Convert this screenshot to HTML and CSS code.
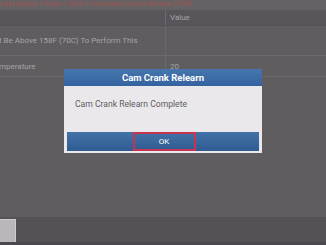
FILE: index.html
```html
<!DOCTYPE html>
<html>
<head>
<meta charset="utf-8">
<link rel="stylesheet" href="styles.css">
</head>
<body>
<div class="page">
  <div class="crumb">ically Search &gt; Pulse &gt; 2022 &gt; Powertrain Control Module (PCM)</div>
  <div class="table">
    <div class="row head">
      <div class="c1"></div>
      <div class="c2">Value</div>
    </div>
    <div class="row tall">
      <div class="c1">t Be Above 158F (70C) To Perform This</div>
      <div class="c2"></div>
    </div>
    <div class="row">
      <div class="c1">mperature</div>
      <div class="c2">20</div>
    </div>
  </div>
  <div class="spacer"></div>
  <div class="bottombar">
    <div class="btnstub"></div>
  </div>
  <div class="strip"></div>
</div>
<div class="dialog">
  <div class="dtitle">Cam Crank Relearn</div>
  <div class="dbody">Cam Crank Relearn Complete</div>
  <div class="dbtns">
    <div class="dbtn"></div>
    <div class="dbtn ok">OK</div>
    <div class="dbtn"></div>
  </div>
</div>
</body>
</html>
```
FILE: styles.css
```css
html, body {
  margin: 0;
  padding: 0;
}
body {
  width: 326px;
  height: 245px;
  overflow: hidden;
  background: #5f5d60;
  font-family: Roboto, "Liberation Sans", sans-serif;
  position: relative;
}
.page {
  display: flex;
  flex-direction: column;
  height: 245px;
}
.crumb {
  height: 10px;
  line-height: 9px;
  font-size: 6.8px;
  color: #9e544f;
  white-space: nowrap;
  overflow: hidden;
  margin-left: -1px;
  background: #656265;
}
.table {
  display: flex;
  flex-direction: column;
}
.row {
  display: flex;
  height: 20px;
  border-bottom: 1px solid #6b696c;
  font-size: 8px;
  color: #a6a4a7;
}
.row.head {
  height: 15px;
  background: #58565a;
  border-bottom: 1px solid #535154;
}
.row.tall {
  height: 29px;
}
.c1 {
  width: 166px;
  display: flex;
  align-items: center;
  white-space: nowrap;
  overflow: hidden;
  border-right: 1px solid #6b696c;
  margin-left: -1px;
}
.c2 {
  flex: 1;
  display: flex;
  align-items: center;
  padding-left: 4px;
}
.spacer {
  flex: 1;
}
.bottombar {
  height: 25px;
  background: #545255;
  display: flex;
  align-items: flex-end;
}
.btnstub {
  width: 16px;
  height: 23px;
  background: #b9b7ba;
  border-top: 1px solid #cfcdd0;
  border-right: 1px solid #cfcdd0;
  box-sizing: border-box;
}
.strip {
  height: 3px;
  background: #4b4650;
}
.dialog {
  position: absolute;
  left: 64px;
  top: 69px;
  width: 198px;
  height: 84px;
  background: #ebe8ec;
  display: flex;
  flex-direction: column;
}
.dtitle {
  height: 17px;
  background: linear-gradient(#4676ad, #3563a0);
  color: #ffffff;
  font-weight: bold;
  font-size: 9.5px;
  display: flex;
  align-items: center;
  justify-content: center;
}
.dbody {
  height: 46px;
  display: flex;
  align-items: center;
  padding-left: 11px;
  font-size: 8.6px;
  color: #5e5c60;
  padding-bottom: 10px;
  box-sizing: border-box;
}
.dbtns {
  display: flex;
  margin: 0 3px;
  height: 19px;
  background: linear-gradient(#4272a9, #2f5b92);
}
.dbtn {
  flex: 1;
  display: flex;
  align-items: center;
  justify-content: center;
  color: #ffffff;
  font-size: 8px;
  box-sizing: border-box;
}
.dbtn.ok {
  border: 2px solid #c8334f;
  flex: 0 0 63px;
  margin-left: 2px;
}
```
